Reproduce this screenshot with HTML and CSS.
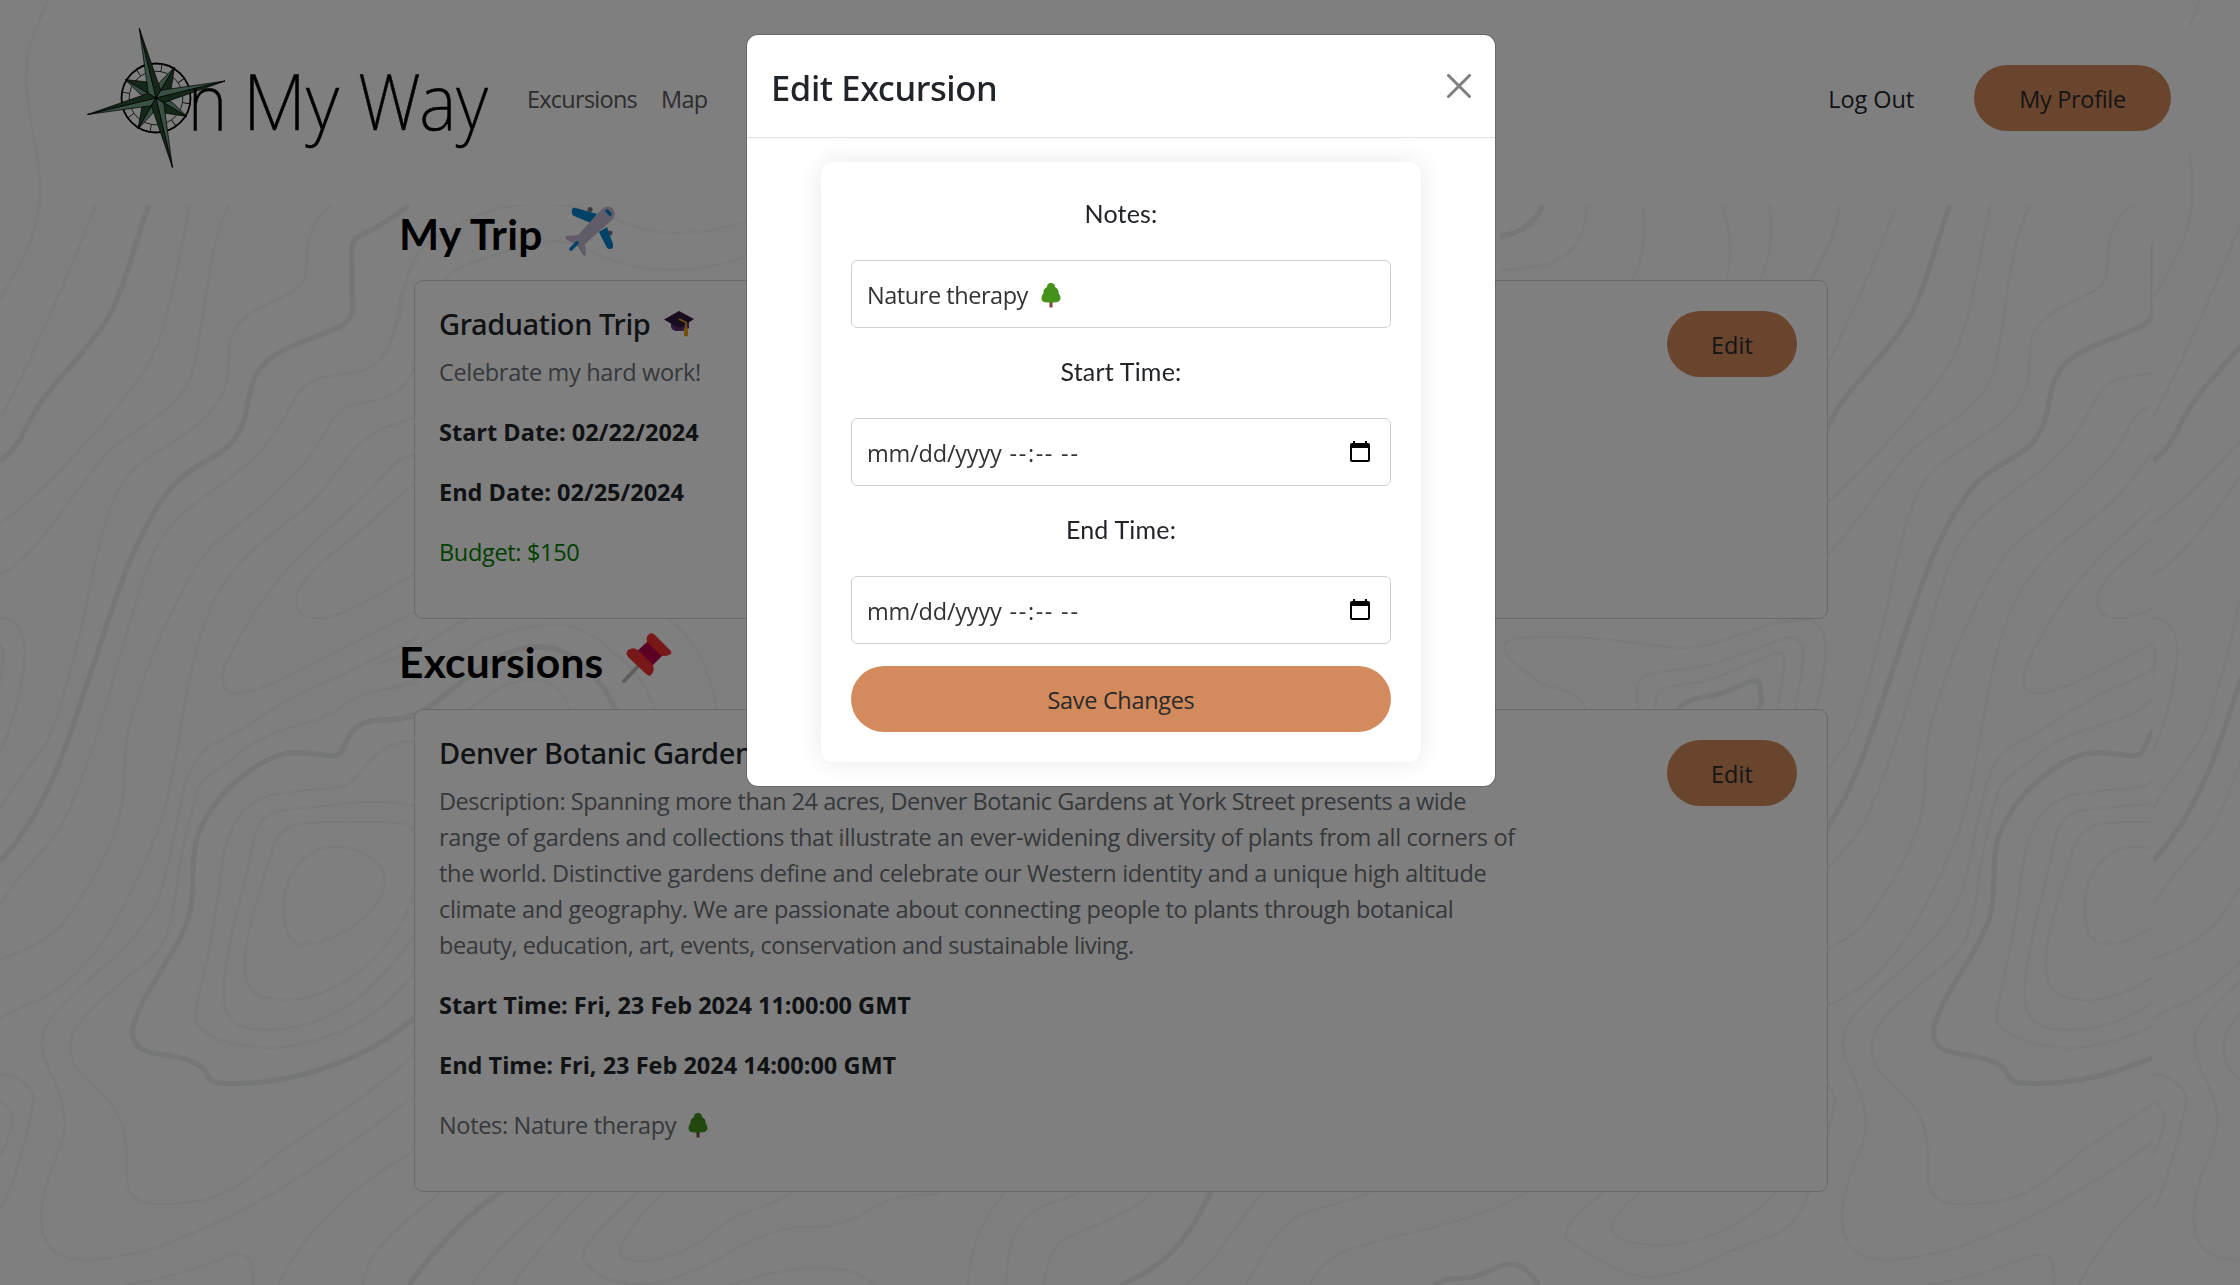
FILE: index.html
```
<!DOCTYPE html>
<html lang="en">
<head>
<meta charset="utf-8">
<title>On My Way</title>
<link rel="stylesheet" href="styles.css">
</head>
<body>
<svg class="contours" viewBox="0 0 2240 1285" aria-hidden="true">
  <defs>
    <clipPath id="clip-repeat"><rect x="1801" y="0" width="351.500" height="1285"/></clipPath>
    <clipPath id="clip-edge"><rect x="2153" y="0" width="87" height="1285"/></clipPath>
    <g id="ridge">
      <path d="M47 0C42 22 26 37 26 78C26 120 40 145 40 190V205"/>
      <g transform="translate(0 180) scale(.33333 .70466)">
        <path d="M120 0C122 70 90 95 0 170M287 35C220 120 60 290 0 338M568 35C530 130 500 220 440 265C330 345 80 465 0 487M688 35C610 100 610 260 560 292C490 345 370 355 300 400C200 455 110 535 0 560"/>
        <path class="bold" d="M447 35C410 80 370 160 325 195C240 260 140 290 80 350C60 370 30 390 0 399"/>
        <path d="M1000 35C960 42 920 75 920 110C920 140 920 146 870 160C800 180 690 190 687 240C685 280 690 300 620 335C540 375 410 390 360 435C290 495 270 600 220 680C190 735 160 780 140 798C100 825 40 860 0 893"/>
        <path class="bold" d="M1230 35C1160 60 1100 75 1070 82C1048 90 1058 110 1056 140C1054 185 1070 190 1030 205C940 230 800 235 760 285C735 315 750 345 690 375C640 400 560 405 500 445C380 520 320 640 250 730C170 850 110 910 0 967"/>
        <path d="M1260 110C1180 150 1205 210 1150 250C1100 290 950 260 890 305C860 330 850 350 770 390C660 445 520 460 450 540C370 640 330 750 220 880C150 960 120 940 0 1029M1245 260C1200 340 1040 295 990 345C950 390 830 450 640 517C570 550 460 660 410 740C355 820 385 840 365 890C340 950 270 1000 190 1055C130 1085 60 1095 0 1106"/>
        <path d="M1245 337C1170 347 1090 360 1040 395C1000 420 970 445 890 475C790 510 680 550 630 610C540 710 540 850 460 940C380 1030 290 1120 130 1160C90 1170 30 1180 0 1190"/>
        <path d="M1245 391C1190 390 1170 410 1110 440C980 500 880 535 790 595C730 635 680 680 668 700C660 725 690 732 750 726C820 718 1000 670 1245 613M1245 433C1190 445 1140 480 1010 525C930 555 880 580 890 602C900 627 970 625 1020 615C1100 600 1170 580 1245 558"/>
        <path d="M1260 647C1130 680 1060 695 920 725C800 750 760 775 650 798C590 810 560 840 540 890C510 950 500 1000 460 1035C410 1085 240 1140 160 1185C85 1230 150 1255 180 1300C215 1350 180 1370 150 1410C120 1450 110 1490 150 1515C200 1545 350 1530 470 1515C700 1475 900 1425 1245 1298"/>
        <path d="M1260 713C1200 722 1120 720 1040 742C970 775 830 770 720 812C650 840 600 850 590 870C560 920 540 960 525 1020C500 1090 480 1095 400 1125C310 1160 230 1190 214 1220C200 1260 260 1275 300 1295C380 1330 382 1360 381 1410C378 1435 400 1455 480 1453C700 1455 750 1410 850 1376C980 1335 1120 1295 1245 1240"/>
        <path class="bold" d="M1260 757C1170 775 1100 755 1052 785C1030 800 1030 820 990 817C900 812 850 805 760 835C680 860 620 895 590 935C570 975 585 1000 572 1035C545 1095 400 1165 398 1210C400 1240 460 1238 520 1244C650 1255 600 1275 650 1281C850 1290 1100 1250 1245 1188"/>
        <path d="M1245 797C1100 795 1100 850 1030 860C930 870 800 860 730 895C650 940 670 1000 630 1085C600 1160 570 1190 600 1203C650 1225 770 1235 860 1230C1000 1215 1120 1200 1245 1125M1245 888C1100 875 1000 890 900 891C820 895 780 895 760 940C735 1000 700 1050 680 1110C650 1190 690 1205 800 1206C1000 1205 1130 1150 1245 1070M1245 925C1210 905 1150 913 1000 911C900 912 850 910 820 945C780 1010 740 1060 735 1105C730 1150 760 1165 870 1163C1030 1162 1220 1080 1245 1000"/>
        <path d="M852 1035C850 975 930 945 1010 946C1090 948 1155 970 1155 995C1155 1020 1100 1050 1030 1067C920 1095 852 1095 852 1035ZM1245 1377C1100 1415 920 1480 835 1568M1260 1462C1150 1500 1095 1535 1088 1568M380 1568C550 1555 640 1535 700 1525C750 1522 765 1535 758 1568"/>
        <path d="M0 621C60 622 80 650 73 680C65 730 30 780 0 812M0 656C15 670 5 690 0 716M0 1270C40 1268 110 1285 100 1312C80 1360 40 1430 0 1462M0 1308C60 1320 35 1350 0 1387"/>
      </g>
    </g>
  </defs>
  <use href="#ridge"/>
  <g clip-path="url(#clip-repeat)"><use href="#ridge" x="1801"/></g>
  <g clip-path="url(#clip-edge)"><use href="#ridge" x="2152.500"/></g>
  <!-- above the trip card -->
  <path d="M380 357C410 330 395 270 425 245C450 225 490 206 530 204C600 202 620 230 670 233C710 234 730 225 750 221M444 281C455 262 490 260 505 251C530 243 560 235 585 248C640 280 710 272 750 254"/>
  <path class="bold" d="M1500 236C1522 234 1535 222 1543 205"/>
  <path d="M1587 205C1583 250 1570 268 1500 270M1643 205C1645 245 1644 260 1631 281M1722 205C1732 235 1732 260 1726 281M1769 205C1775 240 1768 262 1760 281M1840 205C1836 235 1820 260 1810 281"/>
  <!-- between the two cards -->
  <path class="bold" d="M380 720C425 722 440 695 480 668C520 640 560 640 585 668C600 680 608 695 616 710"/>
  <path d="M380 690C430 680 450 660 480 642C550 615 580 620 610 650C640 670 650 695 655 710M468 710C495 690 505 680 535 680C550 680 565 690 570 710M380 663C425 650 450 625 470 618M665 618C695 635 710 670 717 710"/>
  <path d="M1586 710C1580 685 1550 695 1530 675C1500 655 1495 640 1520 638C1580 632 1640 645 1680 648C1730 648 1750 620 1808 620C1835 625 1825 675 1815 710M1639 710C1630 665 1650 675 1705 666C1750 655 1780 635 1795 638C1810 645 1800 675 1795 710M1656 710C1650 680 1675 689 1710 680C1750 665 1775 650 1782 653C1788 660 1780 690 1777 710"/>
  <path class="bold" d="M1679 710C1685 695 1710 700 1730 690C1750 682 1760 675 1760 688L1762 700L1759 710"/>
  <!-- below the excursion card -->
  <path class="bold" d="M504 1190C470 1210 430 1255 409 1285"/>
  <path d="M444 1190C425 1205 410 1215 400 1228M564 1190C530 1220 490 1255 472 1285M593 1190C560 1225 530 1260 512 1285M640 1190C610 1220 585 1240 583 1257C590 1275 615 1284 637 1284C700 1284 745 1230 800 1227C860 1231 870 1200 905 1196C925 1194 935 1196 942 1190M666 1190C640 1215 620 1240 620 1254C625 1262 645 1262 660 1259C705 1248 715 1225 740 1215C765 1205 785 1200 795 1190M729 1285C800 1262 850 1262 875 1285M1007 1190C980 1220 970 1250 968 1285M1083 1190C1060 1205 1035 1200 1020 1225C1008 1240 1007 1270 1006 1285M1120 1214C1085 1235 1055 1230 1048 1265L1043 1285M1152 1190C1145 1200 1135 1208 1120 1214M1265 1190C1240 1215 1220 1260 1185 1285M1379 1190C1340 1205 1300 1210 1290 1222C1270 1235 1260 1265 1245 1285M1529 1190C1480 1225 1380 1235 1340 1253C1325 1262 1315 1272 1309 1285"/>
  <path class="bold" d="M1212 1190C1190 1235 1170 1265 1120 1285M1434 1285C1450 1273 1460 1285 1492 1270C1515 1258 1525 1265 1539 1285"/>
  <path d="M1606 1190C1575 1215 1560 1230 1567 1240C1600 1260 1620 1277 1650 1277C1690 1277 1720 1250 1775 1235C1795 1225 1803 1210 1808 1190M1642 1190C1600 1225 1600 1243 1655 1245C1710 1245 1750 1220 1778 1190"/>
</svg>

<header class="site-header">
  <svg class="logo" viewBox="80 20 420 156" role="img" aria-label="On My Way">
    <g fill="none" stroke="#000">
      <circle cx="156" cy="98" r="34.500" stroke-width="1.800"/>
      <circle cx="156" cy="98" r="26.800" stroke-width=".8"/>
      <circle cx="156" cy="98" r="30.500" stroke-width="7" stroke-dasharray=".8 11.180" transform="rotate(9 156 98)"/>
    </g>
    <g transform="translate(156 98)" stroke="#000" stroke-width=".7" stroke-linejoin="round">
      <path class="leaf-light" d="M0 0L3 -15L18.500 -31ZM0 0L16 4L31 18.500ZM0 0L-3 15L-18 31ZM0 0L-16 -4L-31 -18.500Z"/>
      <path class="leaf-dark" d="M0 0L15 -8L18.500 -31ZM0 0L8 15L31 18.500ZM0 0L-14 8L-18 31ZM0 0L-8 -16L-31 -18.500Z"/>
      <path class="leaf-light" d="M0 0L-7.700 -4.700L-16.700 -69.700ZM0 0L4.700 -7.700L69 -17ZM0 0L7.700 4.700L16.500 69.500ZM0 0L-4.700 7.700L-68.500 16.500Z"/>
      <path class="leaf-dark" d="M0 0L4.700 -7.700L-16.700 -69.700ZM0 0L7.700 4.700L69 -17ZM0 0L-4.700 7.700L16.500 69.500ZM0 0L-7.700 -4.700L-68.500 16.500Z"/>
    </g>
    <g class="wordmark">
      <text x="188" y="130" textLength="39" lengthAdjust="spacingAndGlyphs">n</text>
      <text x="243" y="130" textLength="96" lengthAdjust="spacingAndGlyphs">My</text>
      <text x="358" y="130" textLength="130" lengthAdjust="spacingAndGlyphs">Way</text>
    </g>
  </svg>
  <nav class="main-nav"><a>Excursions</a><a>Map</a></nav>
  <div class="account"><a class="logout">Log Out</a><a class="button profile">My Profile</a></div>
</header>

<main class="page">
  <h2 class="heading">My Trip
    <svg class="emoji-lg" viewBox="0 0 50 50"><circle cx="25" cy="3.500" r="2.500" fill="#7a7180"/><circle cx="45" cy="27" r="2.500" fill="#7a7180"/><path d="M7 4Q7 1 11 2L32 8 26 17 9 10Q6 8 7 4ZM42 21L48 38Q49 43 45 43Q42 43 41 40L34 26Z" fill="#0084ce"/><path d="M37 3Q43-2 48 3Q52 8 47 14L20 38 21 49Q19 51 17 48L12 39 2 34Q-1 31 1 30L13 29Z" fill="#c4b9d2"/><path d="M6 43L12 37M42 5L45 8" stroke="#0084ce" stroke-width="3.600" stroke-linecap="round"/></svg>
  </h2>
  <section class="card trip">
    <div class="card-text">
      <h5>Graduation Trip
        <svg class="emoji-md" viewBox="0 0 30 26"><path d="M7 10H25V17Q23 20 17 20H12Q7 19 7 15Z" fill="#5c3276"/><path d="M0 8.500L15 0 30 8 18 16Q16 17 13 16Z" fill="#301c40"/><path d="M15 8L22 11.500V18" fill="none" stroke="#e8a020" stroke-width="1.800"/><rect x="20" y="16" width="4" height="9.500" rx="1.500" fill="#e8a020"/></svg>
      </h5>
      <p class="muted">Celebrate my hard work!</p>
      <p class="strong">Start Date: 02/22/2024</p>
      <p class="strong">End Date: 02/25/2024</p>
      <p class="budget">Budget: $150</p>
    </div>
    <a class="button edit">Edit</a>
  </section>

  <h2 class="heading">Excursions
    <svg class="emoji-pin" viewBox="0 0 51 51"><path d="M3 48L20 30" stroke="#bdbdbd" stroke-width="4" stroke-linecap="round"/><path d="M12 22L28 7 42 22 28 36Z" fill="#b8004c"/><path d="M7 17Q13 13 18 18L31 31Q35 37 30 42Q28 44 24 40L7 24Q4 20 7 17ZM28 1Q31-1 34 2L49 17Q52 20 48 22Q41 25 36 19L28 11Q23 6 28 1Z" fill="#f03030"/></svg>
  </h2>
  <section class="card excursion">
    <div class="card-text">
      <h5>Denver Botanic Gardens</h5>
      <p class="muted description"><span class="tight">Description: Spanning more than 24 acres, Denver Botanic Gardens at York Street presents a wide</span><br>range of gardens and collections that illustrate an ever-widening diversity of plants from all corners of<br>the world. Distinctive gardens define and celebrate our Western identity and a unique high altitude<br>climate and geography. We are passionate about connecting people to plants through botanical<br><span class="tight">beauty, education, art, events, conservation and sustainable living.</span></p>
      <p class="strong">Start Time: Fri, 23 Feb 2024 11:00:00 GMT</p>
      <p class="strong">End Time: Fri, 23 Feb 2024 14:00:00 GMT</p>
      <p class="muted">Notes: Nature therapy
        <svg class="tree" viewBox="0 0 20 25"><path d="M8.500 17H11.500V24.500H8.500Z" fill="#7d4533"/><path d="M10 0Q14 0 14 4Q18 6 17.500 10Q20 13 19.500 16Q18 20 12 19.500H8Q1 20 .5 16Q0 13 2.500 10Q2 6 6 4Q6 0 10 0Z" fill="#44911b"/></svg>
      </p>
    </div>
    <a class="button edit">Edit</a>
  </section>
</main>

<div class="backdrop">
  <div class="modal" role="dialog">
    <div class="modal-header">
      <span class="modal-title">Edit Excursion</span>
      <svg class="close" viewBox="0 0 24 24"><path d="M1.500 1.500L22.500 22.500M22.500 1.500L1.500 22.500" stroke="#7f7f7f" stroke-width="3" stroke-linecap="round"/></svg>
    </div>
    <form class="form">
      <span class="label">Notes:</span>
      <div class="field"><span>Nature therapy</span>
        <svg class="tree" viewBox="0 0 20 25"><path d="M8.500 17H11.500V24.500H8.500Z" fill="#7d4533"/><path d="M10 0Q14 0 14 4Q18 6 17.500 10Q20 13 19.500 16Q18 20 12 19.500H8Q1 20 .5 16Q0 13 2.500 10Q2 6 6 4Q6 0 10 0Z" fill="#44911b"/></svg>
      </div>
      <span class="label">Start Time:</span>
      <div class="field date"><span class="day">mm/dd/yyyy</span><span class="clock">--:--</span><span class="meridiem">--</span>
        <svg class="calendar" viewBox="0 0 20 21"><path fill-rule="evenodd" d="M2 2H3V0H5V2H15V0H17V2H18Q20 2 20 4V19Q20 21 18 21H2Q0 21 0 19V4Q0 2 2 2ZM2 7V19H18V7Z"/></svg>
      </div>
      <span class="label">End Time:</span>
      <div class="field date"><span class="day">mm/dd/yyyy</span><span class="clock">--:--</span><span class="meridiem">--</span>
        <svg class="calendar" viewBox="0 0 20 21"><path fill-rule="evenodd" d="M2 2H3V0H5V2H15V0H17V2H18Q20 2 20 4V19Q20 21 18 21H2Q0 21 0 19V4Q0 2 2 2ZM2 7V19H18V7Z"/></svg>
      </div>
      <a class="button save">Save Changes</a>
    </form>
  </div>
</div>
</body>
</html>
```
FILE: styles.css
```
* { box-sizing: border-box; }
body {
  margin: 0;
  height: 1285px;
  overflow: hidden;
  background: #fff;
  color: #212529;
  font: 400 23.5px/36px "Open Sans", sans-serif;
  letter-spacing: -.33px;
}
h2, h5, p { margin: 0; }

.contours { position: absolute; inset: 0; width: 2240px; height: 1285px; }
.contours path { fill: none; stroke: #f4f6f5; stroke-width: 2.5px; vector-effect: non-scaling-stroke; }
.contours .bold { stroke: #edf1f0; stroke-width: 5.5px; }

.site-header {
  position: relative;
  display: flex;
  align-items: center;
  height: 205px;
  margin: 0 51px 0 48px;
  padding: 0 18px 9px 32px;
  background: #fff;
}
.logo { width: 420px; height: 156px; flex: none; overflow: visible; }
.leaf-light { fill: #73a28b; }
.leaf-dark { fill: #284e30; }
.wordmark { font: 200 77px "Noto Sans", sans-serif; letter-spacing: 0; stroke: #000; stroke-width: .6px; }
.main-nav { display: flex; gap: 24px; margin: 2px 0 0 27px; color: #595959; letter-spacing: -.75px; }
.account { display: flex; align-items: center; gap: 60px; margin-left: auto; color: #212529; }
.logout { padding-top: 2px; letter-spacing: -.1px; }
.button {
  display: flex;
  align-items: center;
  justify-content: center;
  height: 66px;
  padding-top: 2px;
  border-radius: 33px;
  background: #d38b5d;
  color: #2a2a2a;
}
.profile { width: 197px; }
.edit { width: 130px; flex: none; margin: 5px 6px 0 0; letter-spacing: .1px; }

.page { position: relative; width: 1429px; margin-left: 399px; }
.heading {
  display: flex;
  align-items: center;
  height: 75px;
  padding-bottom: 18px;
  color: #000;
  font: 700 42.5px/52px Lato, sans-serif;
  letter-spacing: .2px;
}
.card + .heading { height: 90px; padding-top: 13px; }
.emoji-lg { width: 50px; height: 50px; margin: -5px 0 0 22px; }
.emoji-pin { width: 51px; height: 51px; margin: -6px 0 0 18px; }
.card {
  display: flex;
  justify-content: space-between;
  align-items: flex-start;
  margin-left: 15px;
  padding: 25px 24px 24px;
  border: 1px solid #d3d3d4;
  border-radius: 9px;
  background: #fff;
}
.trip { height: 339px; }
.excursion { height: 483px; }
.card h5 {
  display: flex;
  align-items: center;
  margin-bottom: 12px;
  font: 500 29px/36px "Noto Sans", sans-serif;
  letter-spacing: -.4px;
}
.card p { display: flex; align-items: center; margin-bottom: 24px; white-space: nowrap; }
.card p.description { display: block; }
.tight { letter-spacing: -.46px; }
.emoji-md { width: 30px; height: 26px; margin-left: 14px; }
.muted { color: #6d7074; }
.strong { font-weight: 700; letter-spacing: 0; }
.budget { color: #008000; }
.tree { width: 20px; height: 25px; margin-left: 12px; }

.backdrop {
  position: fixed;
  inset: 0;
  display: flex;
  justify-content: center;
  align-items: flex-start;
  padding-top: 34px;
  padding-left: 2px;
  background: rgba(0, 0, 0, .5);
}
.modal {
  width: 750px;
  height: 753px;
  border: 1px solid rgba(0, 0, 0, .18);
  border-radius: 12px;
  background: #fff;
  background-clip: padding-box;
}
.modal-header {
  display: flex;
  justify-content: space-between;
  align-items: center;
  height: 103px;
  padding: 0 24px;
  border-bottom: 1px solid #dee2e6;
}
.modal-title { padding-top: 3px; font: 500 34.6px/54px "Noto Sans", sans-serif; letter-spacing: -.4px; }
.close { width: 24px; height: 24px; }
.form {
  display: flex;
  flex-direction: column;
  width: 600px;
  height: 600px;
  margin: 24px auto 0;
  padding: 30px;
  border-radius: 12px;
  box-shadow: 0 0 24px rgba(0, 0, 0, .09);
}
.label { height: 68px; padding-top: 3px; text-align: center; font: 400 25px/36px Lato, sans-serif; letter-spacing: .2px; }
.field {
  display: flex;
  align-items: center;
  height: 68px;
  margin-bottom: 22px;
  padding: 2px 20px 0 15px;
  border: 1px solid #ced0d3;
  border-radius: 6px;
  color: #333;
  letter-spacing: -.45px;
}
.field .tree { margin: 0 0 0 13px; }
.date { letter-spacing: -.2px; }
.clock { margin: 0 7px 0 8px; letter-spacing: 1.6px; }
.meridiem { letter-spacing: 1.8px; }
.calendar { width: 20px; height: 21px; margin: -4px 0 0 auto; }
.save { flex: none; }
```
